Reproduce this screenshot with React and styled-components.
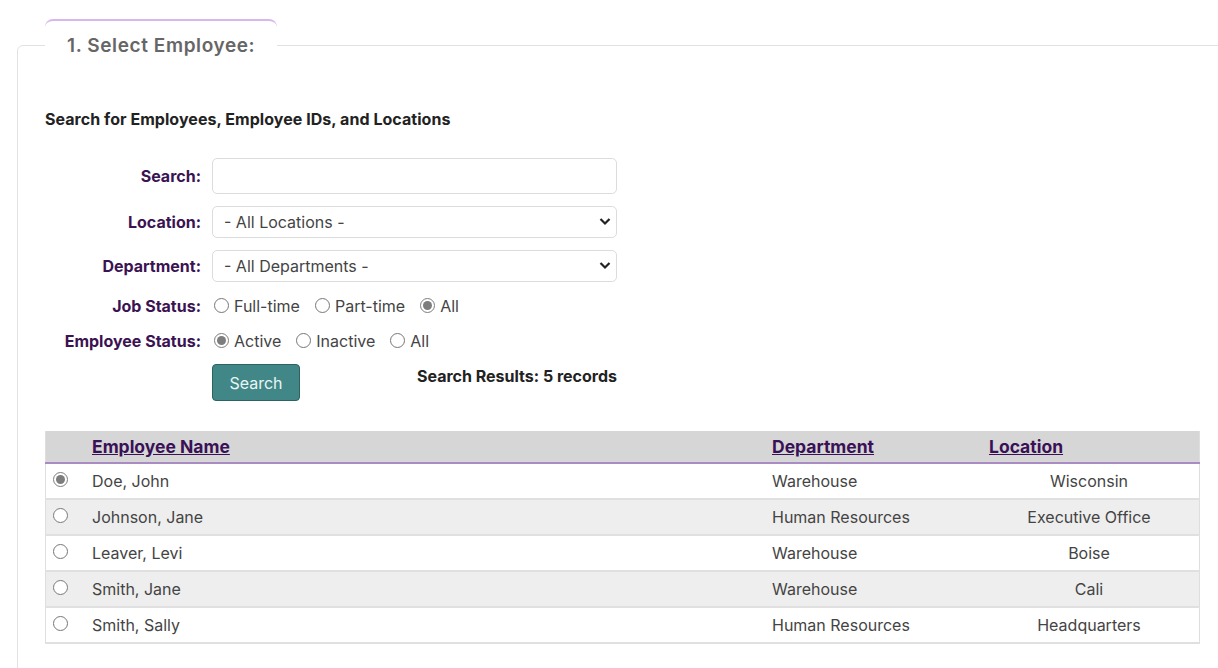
import React, { useState } from "react";
import styled, { createGlobalStyle } from "styled-components";

const GlobalStyle = createGlobalStyle`
  html, body {
    margin: 0;
    padding: 0;
    background: #fff;
    overflow: hidden;
  }
  body {
    font-family: Inter, "Noto Sans", "Liberation Sans", sans-serif;
    color: #444;
  }
`;

const Fieldset = styled.fieldset`
  margin: 19px -10px 0 17px;
  padding: 0 27px 80px;
  border: 1px solid #e2e2e2;
  border-radius: 6px;
  min-width: 0;
`;

const Legend = styled.legend`
  padding: 12px 22px;
  line-height: 26px;
  font-size: 19px;
  font-weight: 600;
  color: #666;
  background: #fff;
  border-top: 2px solid #d8b8ec;
  border-radius: 8px 8px 0 0;
  letter-spacing: 0.6px;
`;

const Heading = styled.h3`
  margin: 38px 0 29px;
  font-size: 16px;
  line-height: 20px;
  font-weight: 700;
  color: #222;
  letter-spacing: 0.05px;
`;

const FormGrid = styled.div`
  display: grid;
  grid-template-columns: 156px 405px;
  column-gap: 11px;
  row-gap: 12px;
  align-items: center;
`;

const Label = styled.label`
  text-align: right;
  font-size: 16px;
  font-weight: 700;
  color: #3b1252;
  white-space: nowrap;
`;

const TextInput = styled.input`
  box-sizing: border-box;
  height: 36px;
  width: 100%;
  border: 1px solid #dcdcdc;
  border-radius: 5px;
  padding: 0 11px;
  font: inherit;
  font-size: 16px;
`;

const SelectWrap = styled.div`
  position: relative;
  height: 32px;
`;

const Select = styled.select`
  appearance: none;
  box-sizing: border-box;
  height: 32px;
  width: 100%;
  border: 1px solid #dcdcdc;
  border-radius: 5px;
  padding: 0 30px 0 11px;
  font-family: inherit;
  font-size: 16px;
  color: #444;
  background: #fff;
`;

const Chevron = styled.svg`
  position: absolute;
  right: 6px;
  top: 11px;
  width: 12px;
  height: 9px;
  pointer-events: none;
`;

const RadioGroup = styled.div`
  display: flex;
  align-items: center;
  gap: 13px;
  height: 23px;
`;

const RadioOption = styled.label`
  display: flex;
  align-items: center;
  gap: 5px;
  font-size: 16px;
  color: #444;
`;

const Radio = styled.input.attrs({ type: "radio" })`
  margin: 0 0 0 2px;
  width: 15px;
  height: 15px;
  accent-color: #7d7d7d;
`;

const ActionRow = styled.div`
  display: flex;
  justify-content: space-between;
  align-items: flex-start;
`;

const Button = styled.button`
  width: 88px;
  height: 37px;
  background: #418787;
  border: 1px solid #2e6161;
  border-radius: 4px;
  color: #e9f5f5;
  font-family: inherit;
  font-size: 16px;
  cursor: pointer;
`;

const Results = styled.span`
  padding-top: 2px;
  font-size: 16px;
  line-height: 20px;
  font-weight: 700;
  color: #222;
`;

const Table = styled.table`
  width: 100%;
  margin-top: 30px;
  border-collapse: collapse;
  border: 1px solid #dedede;
  border-top: 0;
`;

const HeadRow = styled.tr`
  background: #d6d6d6;
  border-bottom: 2px solid #a98cc4;
`;

const Th = styled.th`
  height: 31px;
  padding: 0 10px;
  text-align: left;
  font-size: 17.5px;
  font-weight: 700;
  width: ${(p) => p.$w || "auto"};

  a {
    color: #3a1157;
    text-decoration: underline;
  }
`;

const Row = styled.tr`
  background: ${(p) => (p.$alt ? "#eeeeee" : "#fff")};
  border-bottom: 2px solid #e0e0e0;
`;

const Td = styled.td`
  height: 34px;
  padding: 0 10px;
  font-size: 16px;
  color: #444;
  text-align: ${(p) => p.$align || "left"};
  vertical-align: middle;
`;

const RadioCell = styled.td`
  width: 29px;
  padding: 7px 0 0 5px;
  vertical-align: top;
`;

const employees = [
  { name: "Doe, John", dept: "Warehouse", loc: "Wisconsin" },
  { name: "Johnson, Jane", dept: "Human Resources", loc: "Executive Office" },
  { name: "Leaver, Levi", dept: "Warehouse", loc: "Boise" },
  { name: "Smith, Jane", dept: "Warehouse", loc: "Cali" },
  { name: "Smith, Sally", dept: "Human Resources", loc: "Headquarters" },
];

const DropDown = ({ id, label }) => (
  <SelectWrap>
    <Select id={id} defaultValue="all">
      <option value="all">{label}</option>
    </Select>
    <Chevron viewBox="0 0 12 9">
      <path d="M1.5 2 L6 6.5 L10.5 2" fill="none" stroke="#222" strokeWidth="2.2" />
    </Chevron>
  </SelectWrap>
);

const App = () => {
  const [selected, setSelected] = useState(0);
  const [job, setJob] = useState("all");
  const [status, setStatus] = useState("active");

  return (
    <>
      <GlobalStyle />
      <Fieldset>
        <Legend>1. Select Employee:</Legend>
        <Heading>Search for Employees, Employee IDs, and Locations</Heading>

        <FormGrid>
          <Label htmlFor="search">Search:</Label>
          <TextInput id="search" type="text" />

          <Label htmlFor="location">Location:</Label>
          <DropDown id="location" label="- All Locations -" />

          <Label htmlFor="department">Department:</Label>
          <DropDown id="department" label="- All Departments -" />

          <Label>Job Status:</Label>
          <RadioGroup>
            {[
              ["full", "Full-time"],
              ["part", "Part-time"],
              ["all", "All"],
            ].map(([v, t]) => (
              <RadioOption key={v}>
                <Radio name="job" checked={job === v} onChange={() => setJob(v)} />
                {t}
              </RadioOption>
            ))}
          </RadioGroup>

          <Label>Employee Status:</Label>
          <RadioGroup>
            {[
              ["active", "Active"],
              ["inactive", "Inactive"],
              ["all", "All"],
            ].map(([v, t]) => (
              <RadioOption key={v}>
                <Radio name="status" checked={status === v} onChange={() => setStatus(v)} />
                {t}
              </RadioOption>
            ))}
          </RadioGroup>

          <span />
          <ActionRow>
            <Button type="button">Search</Button>
            <Results>Search Results: 5 records</Results>
          </ActionRow>
        </FormGrid>

        <Table>
          <thead>
            <HeadRow>
              <Th $w="16px" />
              <Th>
                <a href="#name">Employee Name</a>
              </Th>
              <Th $w="197px">
                <a href="#dept">Department</a>
              </Th>
              <Th $w="200px">
                <a href="#loc">Location</a>
              </Th>
            </HeadRow>
          </thead>
          <tbody>
            {employees.map((e, i) => (
              <Row key={e.name} $alt={i % 2 === 1}>
                <RadioCell>
                  <Radio name="employee" checked={selected === i} onChange={() => setSelected(i)} />
                </RadioCell>
                <Td>{e.name}</Td>
                <Td>{e.dept}</Td>
                <Td $align="center">{e.loc}</Td>
              </Row>
            ))}
          </tbody>
        </Table>
      </Fieldset>
    </>
  );
};

export default App;
